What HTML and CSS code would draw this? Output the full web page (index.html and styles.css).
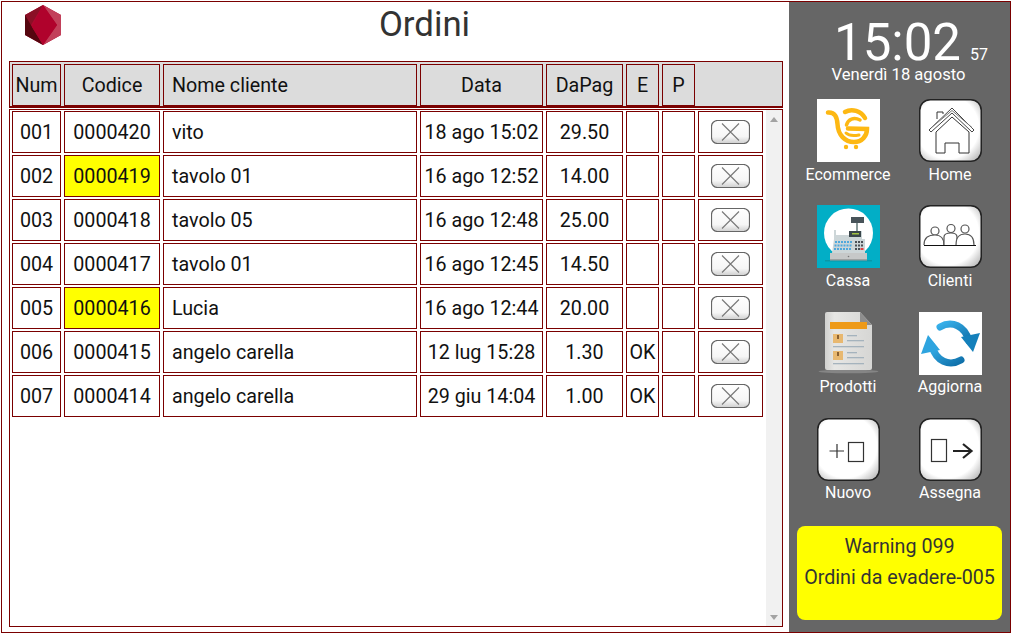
FILE: index.html
```html
<!DOCTYPE html>
<html lang="it">
<head>
<meta charset="utf-8">
<title>Ordini</title>
<link rel="stylesheet" href="styles.css">
</head>
<body>
<div class="frame">
  <main class="main">
    <header class="titlebar">
      <svg class="logo" viewBox="0 0 36 40" aria-hidden="true">
        <polygon points="18,0 36,10 36,30 18,40 0,30 0,10" fill="#b0072f"/>
        <polygon points="18,0 0,10 0,30" fill="#8a1026"/>
        <polygon points="0,30 0,10 7,22 18,40" fill="#55060f"/>
        <polygon points="18,0 36,10 36,30 18,40 32,20" fill="#c2405a"/>
        <polygon points="18,0 7,22 18,40 32,20" fill="#b0022c"/>
      </svg>
      <h1 class="title">Ordini</h1>
    </header>
    <div class="thead">
      <div class="row">
        <div class="cell head">Num</div>
        <div class="cell head">Codice</div>
        <div class="cell head left">Nome cliente</div>
        <div class="cell head">Data</div>
        <div class="cell head">DaPag</div>
        <div class="cell head">E</div>
        <div class="cell head">P</div>
      </div>
    </div>
    <div class="tbody">
      <div class="rows">
        <div class="row">
          <div class="cell">001</div><div class="cell">0000420</div><div class="cell left">vito</div><div class="cell">18 ago 15:02</div><div class="cell">29.50</div><div class="cell"></div><div class="cell"></div>
          <div class="cell btn-cell"><svg class="del" viewBox="0 0 39 24"><use href="#del"/></svg></div>
        </div>
        <div class="row">
          <div class="cell">002</div><div class="cell hl">0000419</div><div class="cell left">tavolo 01</div><div class="cell">16 ago 12:52</div><div class="cell">14.00</div><div class="cell"></div><div class="cell"></div>
          <div class="cell btn-cell"><svg class="del" viewBox="0 0 39 24"><use href="#del"/></svg></div>
        </div>
        <div class="row">
          <div class="cell">003</div><div class="cell">0000418</div><div class="cell left">tavolo 05</div><div class="cell">16 ago 12:48</div><div class="cell">25.00</div><div class="cell"></div><div class="cell"></div>
          <div class="cell btn-cell"><svg class="del" viewBox="0 0 39 24"><use href="#del"/></svg></div>
        </div>
        <div class="row">
          <div class="cell">004</div><div class="cell">0000417</div><div class="cell left">tavolo 01</div><div class="cell">16 ago 12:45</div><div class="cell">14.50</div><div class="cell"></div><div class="cell"></div>
          <div class="cell btn-cell"><svg class="del" viewBox="0 0 39 24"><use href="#del"/></svg></div>
        </div>
        <div class="row">
          <div class="cell">005</div><div class="cell hl">0000416</div><div class="cell left">Lucia</div><div class="cell">16 ago 12:44</div><div class="cell">20.00</div><div class="cell"></div><div class="cell"></div>
          <div class="cell btn-cell"><svg class="del" viewBox="0 0 39 24"><use href="#del"/></svg></div>
        </div>
        <div class="row">
          <div class="cell">006</div><div class="cell">0000415</div><div class="cell left">angelo carella</div><div class="cell">12 lug 15:28</div><div class="cell">1.30</div><div class="cell">OK</div><div class="cell"></div>
          <div class="cell btn-cell"><svg class="del" viewBox="0 0 39 24"><use href="#del"/></svg></div>
        </div>
        <div class="row">
          <div class="cell">007</div><div class="cell">0000414</div><div class="cell left">angelo carella</div><div class="cell">29 giu 14:04</div><div class="cell">1.00</div><div class="cell">OK</div><div class="cell"></div>
          <div class="cell btn-cell"><svg class="del" viewBox="0 0 39 24"><use href="#del"/></svg></div>
        </div>
      </div>
      <div class="scrollbar"><span class="arrow up"></span><span class="arrow down"></span></div>
    </div>
  </main>
  <aside class="side">
    <div class="clock"><span class="time">15:02</span><span class="secs">57</span></div>
    <div class="date">Venerdì 18 agosto</div>
    <nav class="tiles">
      <div class="tile">
        <svg class="icon" viewBox="0 0 63 63">
          <rect width="63" height="63" fill="#fff"/>
          <g fill="none" stroke="#fdb813" stroke-linecap="round">
            <path d="M11 13.500 C18 13 20 18 20.500 25 C21 36 28 43 37 43 C45 43 50 37 50 30 L31 29.500" stroke-width="4.500"/>
            <path d="M28 13 C35 9 44 12 48 19" stroke-width="4.500"/>
            <path d="M43 21 C37 18 31 20 29.500 26" stroke-width="3.500"/>
            <path d="M29 34 C32 37 37 37 42 36" stroke-width="3"/>
          </g>
          <circle cx="29" cy="48" r="2.200" fill="#fdb813"/><circle cx="39" cy="48" r="2.200" fill="#fdb813"/>
        </svg>
        <span class="label">Ecommerce</span>
      </div>
      <div class="tile">
        <svg class="icon" viewBox="0 0 63 63">
          <use href="#btn"/>
          <g fill="#fff" stroke="#333" stroke-width="1">
            <path d="M18 20 V13 H24 V15"/>
            <path d="M10 31 L33 9 L55 31 L53 33 L33 14 L12 33 Z" stroke="#444"/>
            <path d="M12.500 28.500 L33 11.500 L53 28.500" fill="none" stroke="#777"/>
            <path d="M17 33 L33 18 L50 33 V54 H40 V44 H26 V54 H17 Z"/>
          </g>
        </svg>
        <span class="label">Home</span>
      </div>
      <div class="tile">
        <svg class="icon" viewBox="0 0 63 63">
          <rect width="63" height="63" fill="#02aec6"/>
          <circle cx="31.500" cy="28" r="24.500" fill="#fff"/>
          <rect x="8" y="55" width="47" height="1.500" fill="#0a97a8"/>
          <rect x="39" y="16" width="2" height="10" fill="#8a9a9a"/>
          <rect x="34" y="12" width="13" height="6" fill="#48545a"/>
          <path d="M17 25 H19 V30 H32 V26 H45 V34 H48 V48 H15 L17 34 Z" fill="#cdd6d8"/>
          <rect x="32" y="26" width="12" height="6" fill="#39454a"/>
          <rect x="35" y="28" width="7" height="1.500" fill="#a0c040"/>
          <path d="M18 37 H35 M17.500 40.500 H35 M17 44 H35" stroke="#4fa8dc" stroke-width="2" stroke-dasharray="2 1"/>
          <path d="M38 37 H47 M38 40.500 H47 M38 44 H43" stroke="#4a4f55" stroke-width="2" stroke-dasharray="2 1"/>
          <rect x="43.500" y="43" width="3" height="2" fill="#e04040"/>
          <rect x="13" y="48" width="37" height="7" fill="#c6c8c8"/>
          <rect x="13" y="54" width="37" height="1.500" fill="#9ea2a2"/>
          <circle cx="31.500" cy="51.500" r="0.800" fill="#777"/>
        </svg>
        <span class="label">Cassa</span>
      </div>
      <div class="tile">
        <svg class="icon" viewBox="0 0 63 63">
          <use href="#btn"/>
          <g fill="#fff" stroke="#555" stroke-width="1.200">
            <circle cx="16" cy="26" r="4"/>
            <path d="M5 40 C5 32 10 30 16 30 C22 30 25 33 25 40"/>
            <circle cx="32" cy="23.500" r="4"/>
            <path d="M25 40 V32 C25 29 28 28 32 28 C36 28 38 29 38 32 V40"/>
            <circle cx="46" cy="24" r="4"/>
            <path d="M37 40 C37 31 41 29 46 29 C51 29 55 32 55 40"/>
          </g>
          <path d="M5 40.500 H57" stroke="#111" stroke-width="1"/>
        </svg>
        <span class="label">Clienti</span>
      </div>
      <div class="tile">
        <svg class="icon" viewBox="0 0 63 63">
          <defs>
            <linearGradient id="paper" x1="0" y1="0" x2="1" y2="0">
              <stop offset="0" stop-color="#d0d0ce"/><stop offset="0.200" stop-color="#e6e6e4"/><stop offset="1" stop-color="#d6d6d4"/>
            </linearGradient>
          </defs>
          <ellipse cx="31.500" cy="59.500" rx="30" ry="1.800" fill="#858585"/>
          <path d="M10 0 H43 L55 13 V56 Q55 58 53 58 H10 Q8 58 8 56 V2 Q8 0 10 0 Z" fill="url(#paper)"/>
          <path d="M43 0 L55 13 H45 Q43 13 43 11 Z" fill="#8e8e8e"/>
          <rect x="13" y="10" width="37" height="7" fill="#ee9a18"/>
          <rect x="16" y="22" width="10" height="9" fill="#e8b870"/>
          <rect x="16" y="39" width="10" height="9" fill="#e8b870"/>
          <rect x="20" y="23" width="2" height="4" fill="#8a6030"/>
          <rect x="20" y="40" width="2" height="4" fill="#8a6030"/>
          <g fill="#a5b3bd">
            <rect x="30" y="23" width="10" height="1.300"/><rect x="30" y="28" width="17" height="1.300"/><rect x="16" y="34" width="31" height="1.300"/>
            <rect x="30" y="40" width="10" height="1.300"/><rect x="30" y="45" width="17" height="1.300"/><rect x="16" y="51" width="31" height="1.300"/>
          </g>
        </svg>
        <span class="label">Prodotti</span>
      </div>
      <div class="tile">
        <svg class="icon" viewBox="0 0 63 63">
          <defs>
            <linearGradient id="blue" x1="0" y1="0" x2="1" y2="1">
              <stop offset="0" stop-color="#37b0ea"/><stop offset="1" stop-color="#0f70aa"/>
            </linearGradient>
          </defs>
          <rect width="63" height="63" fill="#fff"/>
          <path d="M21 15 C33 8 46 14 50 29" fill="none" stroke="url(#blue)" stroke-width="7" stroke-linecap="round"/>
          <polygon points="61,21 54,40 42,25" fill="#1480bb"/>
          <path d="M42 48 C30 55 17 49 13 34" fill="none" stroke="url(#blue)" stroke-width="7" stroke-linecap="round"/>
          <polygon points="2,42 9,23 21,38" fill="#2ea4df"/>
        </svg>
        <span class="label">Aggiorna</span>
      </div>
      <div class="tile">
        <svg class="icon" viewBox="0 0 63 63">
          <use href="#btn"/>
          <path d="M12.500 33 H27 M20 26 V40" stroke="#333" stroke-width="1.200" fill="none"/>
          <rect x="31.500" y="24.500" width="15" height="19" fill="#fff" stroke="#333" stroke-width="1.200"/>
        </svg>
        <span class="label">Nuovo</span>
      </div>
      <div class="tile">
        <svg class="icon" viewBox="0 0 63 63">
          <use href="#btn"/>
          <rect x="12.500" y="21.500" width="15" height="22" fill="#fff" stroke="#333" stroke-width="1.200"/>
          <path d="M34 33 H52 M44 26 L52.500 33 L44 40" fill="none" stroke="#222" stroke-width="2.200"/>
        </svg>
        <span class="label">Assegna</span>
      </div>
    </nav>
    <div class="warning">
      <p class="warn-line">Warning 099</p>
      <p class="warn-line">Ordini da evadere-005</p>
    </div>
  </aside>
</div>
<svg class="defs" aria-hidden="true">
  <defs>
    <radialGradient id="btnfill" cx="0.450" cy="0.450" r="0.680">
      <stop offset="0.750" stop-color="#fff"/><stop offset="1" stop-color="#c4c4c4"/>
    </radialGradient>
    <linearGradient id="delfill" x1="0" y1="0" x2="0" y2="1">
      <stop offset="0" stop-color="#fff"/><stop offset="0.700" stop-color="#f6f6f6"/><stop offset="1" stop-color="#cfcfcf"/>
    </linearGradient>
    <symbol id="btn" viewBox="0 0 63 63">
      <rect x="0.750" y="0.750" width="61.500" height="61.500" rx="10.500" fill="url(#btnfill)" stroke="#222" stroke-width="1.500"/>
    </symbol>
    <symbol id="del" viewBox="0 0 39 24">
      <rect x="0.500" y="0.500" width="38" height="23" rx="6" fill="url(#delfill)" stroke="#666" stroke-width="1.200"/>
      <path d="M11 3.500 L28 20.500 M28 3.500 L11 20.500" stroke="#777" stroke-width="1.100"/>
    </symbol>
  </defs>
</svg>
</body>
</html>
```

FILE: styles.css
```css
* { box-sizing: border-box; }
html, body { margin: 0; padding: 0; background: #fff; }
body { font-family: Roboto, "Liberation Sans", sans-serif; color: #111; overflow: hidden; }
.defs { width: 0; height: 0; display: block; }
.frame {
  margin: 1px;
  width: 1010px;
  height: 632px;
  border: 1px solid #7a0000;
  display: flex;
  background: #fff;
}
.main { width: 787px; padding-left: 7px; padding-right: 6px; }
.titlebar { height: 59px; display: flex; align-items: flex-start; }
.logo { width: 36px; height: 40px; margin: 3px 0 0 16px; flex: none; }
.title {
  flex: 1;
  margin: 0;
  padding-left: 5px;
  text-align: center;
  font-weight: 400;
  font-size: 34.8px;
  line-height: 44px;
  color: #333;
}
.thead {
  width: 774px;
  height: 47px;
  background: #dcdcdc;
  border: 1px solid #7a0000;
  border-bottom-width: 2px;
  padding: 2px;
}
.row {
  display: grid;
  grid-template-columns: 49px 96px 254px 123px 77px 33px 33px 65px;
  column-gap: 3px;
  height: 42px;
}
.cell {
  border: 1px solid #7a0000;
  display: flex;
  align-items: center;
  justify-content: center;
  padding-top: 2px;
  font-size: 19.7px;
  line-height: 24px;
  white-space: nowrap;
  overflow: hidden;
  color: #111;
}
.btn-cell { padding-top: 0; }
.head { background: #dcdcdc; }
.left { justify-content: flex-start; padding-left: 8px; }
.hl { background: #ff0; }
.del { width: 39px; height: 24px; display: block; }
.tbody {
  margin-top: 1px;
  width: 774px;
  height: 518px;
  border: 1px solid #7a0000;
  display: flex;
  justify-content: space-between;
}
.rows { padding: 1px 0 0 2px; display: flex; flex-direction: column; gap: 2px; }
.scrollbar {
  width: 16px;
  background: #f1f1f1;
  display: flex;
  flex-direction: column;
  justify-content: space-between;
  align-items: center;
  padding: 7px 0 6px;
}
.arrow { width: 0; height: 0; border-left: 4px solid transparent; border-right: 4px solid transparent; }
.up { border-bottom: 5px solid #a3a3a3; }
.down { border-top: 5px solid #a3a3a3; }
.side { width: 221px; background: #666; color: #fff; padding: 0 8px; }
.clock { display: flex; align-items: baseline; justify-content: center; padding-left: 23px; height: 64px; padding-top: 19px; }
.time { font-size: 51px; line-height: 44px; color: #fff; }
.secs { font-size: 16px; line-height: 16px; margin-left: 9px; }
.date { text-align: center; font-size: 16.6px; line-height: 18px; margin-right: 2px; }
.tiles {
  display: grid;
  grid-template-columns: 102px 102px;
  grid-auto-rows: 85px;
  row-gap: 21.25px;
  margin-top: 15px;
}
.tile { display: flex; flex-direction: column; align-items: center; }
.icon { width: 63px; height: 63px; display: block; flex: none; }
.label { font-size: 16px; line-height: 20px; margin-top: 2.6px; color: #fff; white-space: nowrap; }
.warning {
  margin-top: 23.25px;
  width: 205px;
  height: 94px;
  background: #ff0;
  border-radius: 8px;
  padding-top: 9px;
  text-align: center;
  color: #333;
}
.warn-line { margin: 0 0 7px; font-size: 19.7px; line-height: 24px; white-space: nowrap; }
```
